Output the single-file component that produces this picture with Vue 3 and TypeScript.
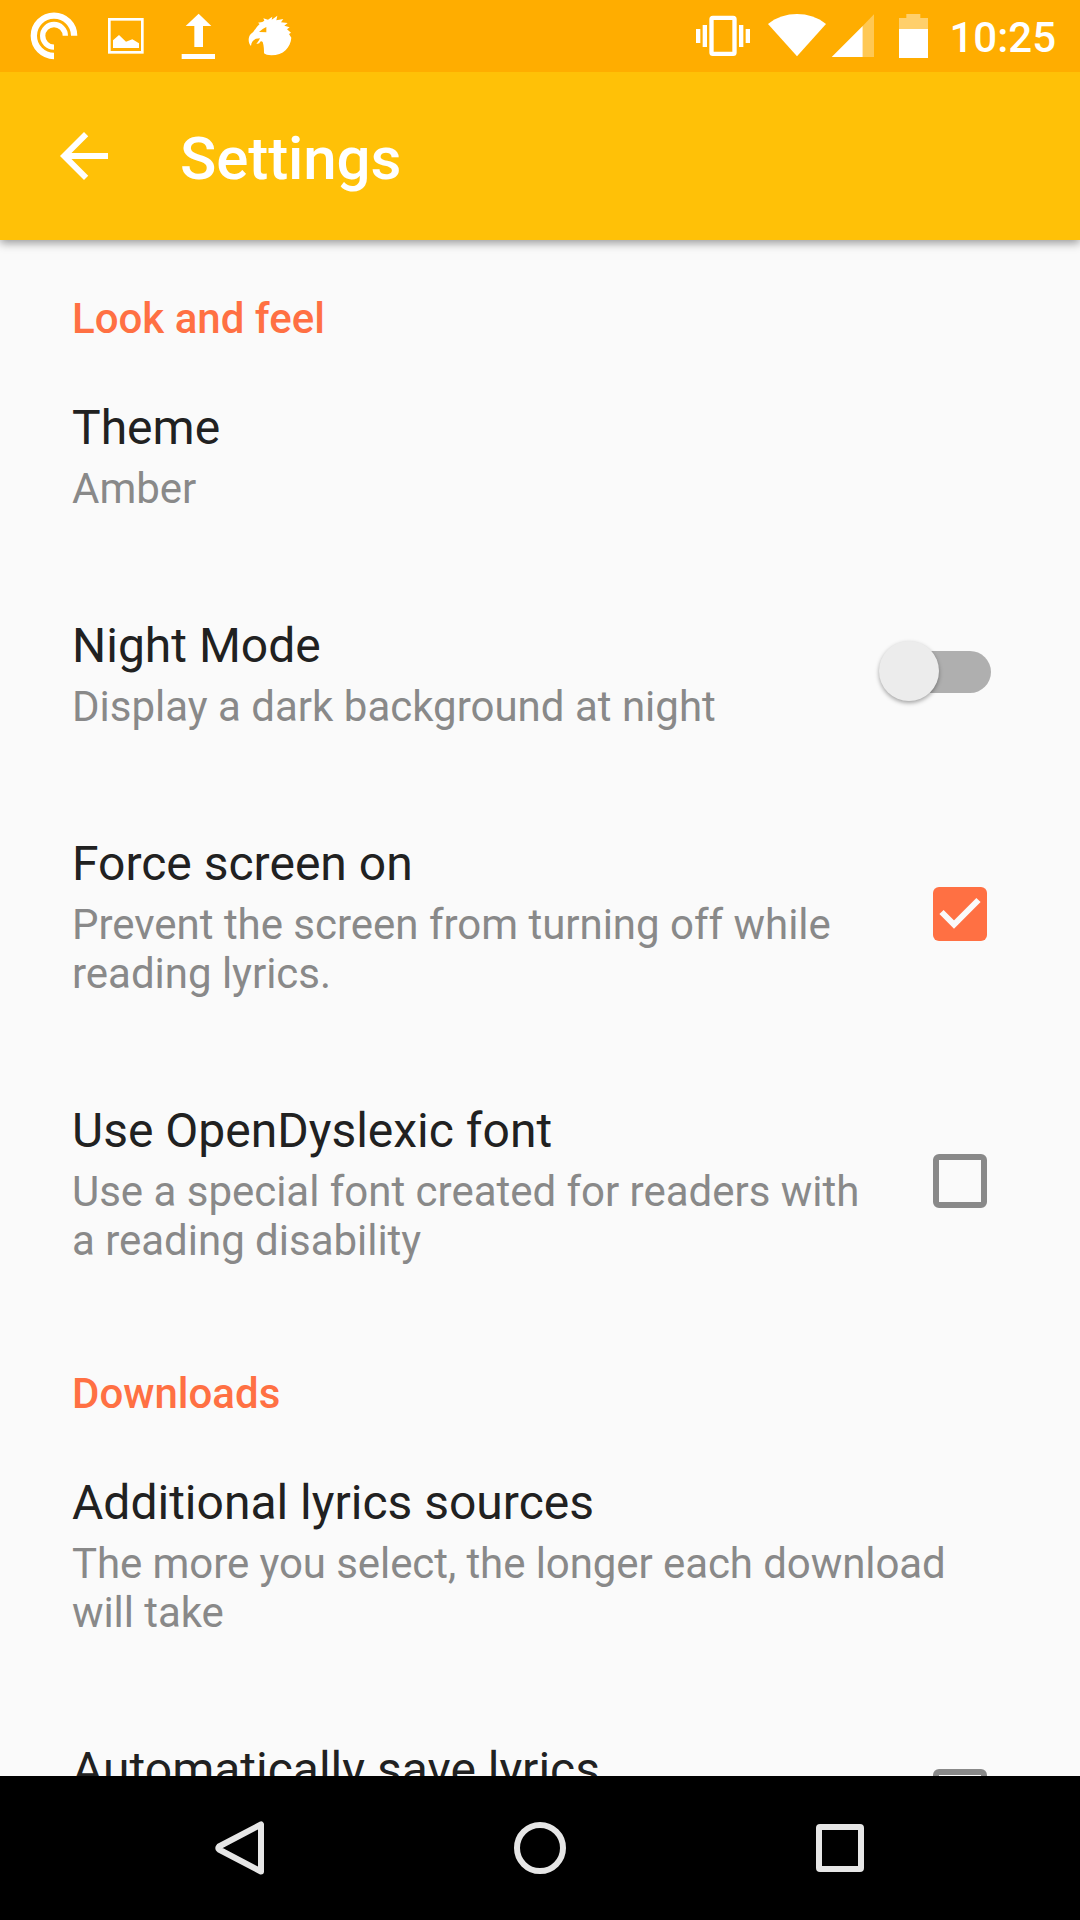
<script setup lang="ts">
interface Preference {
  title: string
  summary?: string
  tracking?: number
  control?: 'switch' | 'checkbox'
  on?: boolean
}

interface Section {
  name: string
  items: Preference[]
}

const sections: Section[] = [
  {
    name: 'Look and feel',
    items: [
      { title: 'Theme', summary: 'Amber' },
      { title: 'Night Mode', summary: 'Display a dark background at night', control: 'switch' },
      {
        title: 'Force screen on',
        summary: 'Prevent the screen from turning off while reading lyrics.',
        tracking: -0.02,
        control: 'checkbox',
        on: true,
      },
      {
        title: 'Use OpenDyslexic font',
        summary: 'Use a special font created for readers with a reading disability',
        tracking: -0.02,
        control: 'checkbox',
      },
    ],
  },
  {
    name: 'Downloads',
    items: [
      {
        title: 'Additional lyrics sources',
        summary: 'The more you select, the longer each download will take',
        tracking: -0.08,
      },
      { title: 'Automatically save lyrics', control: 'checkbox' },
    ],
  },
]
</script>

<template>
  <div class="screen">
    <div class="status-bar">
      <div class="status-group">
        <svg width="64" height="72" viewBox="84 0 192 216" fill="none" stroke="#fff">
          <path d="M222.500 107.500A60.500 60.500 0 1 0 162 168" stroke-width="19" />
          <path d="M196 107.500A34 34 0 1 0 162 141.500" stroke-width="16" />
        </svg>
        <svg width="72" height="72" viewBox="276 0 216 216">
          <rect x="328" y="58" width="99" height="99" fill="none" stroke="#fff" stroke-width="8" />
          <path d="M339 121L357 105L378 125L397 118L417 130V144H339Z" fill="#fff" />
        </svg>
        <svg width="68" height="72" viewBox="492 0 204 216" fill="#fff">
          <path d="M596 41L634 78H609V141H583V78H557Z" />
          <rect x="545" y="162" width="100" height="15" />
        </svg>
        <svg width="68" height="72" viewBox="696 0 204 216" fill="#fff">
          <path
            fill-rule="evenodd"
            d="M753 138C746 131 744 118 748 109C750 103 755 100 759 97L771 80L779 72L774 68L787 66L793 62L790 55L804 59L817 50L815 59L832 47L829 61L850 57L843 67L863 69L853 77L869 82L861 88L873 98L867 102L874 113C872 142 850 166 814 166C804 166 796 163 792 160C792 150 792 138 788 126C784 122 780 124 778 130L769 132L777 121L780 115L768 116C759 120 754 126 753 138ZM777 96L799 97V81L788 87Z"
          />
        </svg>
      </div>
      <div class="status-group">
        <svg width="70" height="72" viewBox="30 0 210 216" fill="#fff">
          <rect x="94.500" y="53.500" width="69" height="108" rx="4" fill="none" stroke="#fff" stroke-width="13" />
          <rect x="48" y="87" width="13" height="42" />
          <rect x="68" y="75" width="13" height="66" />
          <rect x="177" y="75" width="13" height="66" />
          <rect x="197" y="87" width="13" height="42" />
        </svg>
        <svg width="68" height="72" viewBox="240 0 204 216" fill="#fff">
          <path d="M351 169L264 72C288 52 320 42 351 42S414 52 438 72Z" />
        </svg>
        <svg width="64" height="72" viewBox="444 0 192 216" fill="#fff">
          <path d="M548 78L582 43V171H548Z" opacity="0.33" />
          <path d="M455 171L548 78V171Z" />
        </svg>
        <svg width="44" height="72" viewBox="636 0 132 216" fill="#fff">
          <path d="M679 42H721V54H744V87H657V54H679Z" opacity="0.42" />
          <rect x="657" y="87" width="87" height="87" />
        </svg>
        <span class="clock">10:25</span>
      </div>
    </div>

    <header class="app-bar">
      <svg width="72" height="72" viewBox="0 0 24 24" fill="#fff">
        <path d="M20 11H7.830l5.590-5.590L12 4l-8 8 8 8 1.410-1.410L7.830 13H20v-2z" />
      </svg>
      <h1>Settings</h1>
    </header>

    <main class="list">
      <section v-for="section in sections" :key="section.name">
        <h2>{{ section.name }}</h2>
        <div v-for="item in section.items" :key="item.title" class="row">
          <div class="text">
            <div class="title">{{ item.title }}</div>
            <div v-if="item.summary" class="summary" :style="{ letterSpacing: `${item.tracking ?? 0}px` }">
              {{ item.summary }}
            </div>
          </div>
          <div v-if="item.control" class="widget">
            <div v-if="item.control === 'switch'" class="switch"><div class="thumb"></div></div>
            <div v-else class="checkbox" :class="{ checked: item.on }">
              <svg v-if="item.on" width="54" height="54" viewBox="0 0 54 54">
                <path d="M8.500 25L21 37.500L45.500 13" fill="none" stroke="#fafafa" stroke-width="6" />
              </svg>
            </div>
          </div>
        </div>
      </section>
    </main>

    <nav class="nav-bar">
      <svg width="60" height="60" viewBox="0 0 60 60">
        <path d="M51 6.500V53.500L9 31.500Q7.500 30 9 28.500Z" />
      </svg>
      <svg width="60" height="60" viewBox="0 0 60 60"><circle cx="30" cy="30" r="23" /></svg>
      <svg width="60" height="60" viewBox="0 0 60 60"><rect x="9" y="9" width="42" height="42" rx="1" /></svg>
    </nav>
  </div>
</template>

<style>
body {
  background: #fafafa;
}
</style>

<style scoped>
.screen {
  display: flex;
  flex-direction: column;
  width: 1080px;
  height: 1920px;
  overflow: hidden;
  background: #fafafa;
  font-family: Roboto, sans-serif;
}

svg {
  display: block;
  flex: none;
}

.status-bar {
  display: flex;
  flex: none;
  justify-content: space-between;
  height: 72px;
  padding: 0 24px 0 28px;
  background: #ffad00;
  z-index: 2;
}

.status-group {
  display: flex;
}

.clock {
  width: 120px;
  text-align: right;
  font-size: 42px;
  font-weight: 500;
  line-height: 75px;
  color: #fff;
}

.app-bar {
  display: flex;
  flex: none;
  align-items: center;
  gap: 60px;
  height: 168px;
  padding-left: 48px;
  background: #ffc107;
  box-shadow: 0 3px 9px rgba(0, 0, 0, 0.4);
  z-index: 1;
}

h1 {
  margin: 6px 0 0;
  font-size: 60px;
  font-weight: 500;
  line-height: 70px;
  letter-spacing: -0.1px;
  color: #fff;
}

.list {
  flex: 1;
  min-height: 0;
  margin-top: -1px;
  overflow: hidden;
}

h2 {
  box-sizing: border-box;
  height: 105px;
  margin: 0;
  padding: 55px 72px 0;
  font-size: 42px;
  font-weight: 500;
  line-height: 49px;
  color: #ff7043;
}

.row {
  display: flex;
  align-items: center;
  min-height: 218px;
  padding: 0 72px;
}

.text {
  flex: 1;
  align-self: flex-start;
  padding: 56px 0 49px;
}

.title {
  font-size: 48px;
  line-height: 56px;
  color: #212121;
}

.summary {
  margin-top: 8px;
  font-size: 42px;
  line-height: 49px;
  color: #898989;
}

.widget {
  display: flex;
  justify-content: flex-end;
  width: 132px;
}

.switch {
  display: flex;
  align-items: center;
  width: 92px;
  height: 42px;
  margin: 1px 17px 0 0;
  border-radius: 21px;
  background: #afafaf;
}

.thumb {
  flex: none;
  width: 60px;
  height: 60px;
  margin: -1px 0 0 -20.5px;
  border-radius: 50%;
  background: #ececec;
  box-shadow: 0 2px 4px rgba(0, 0, 0, 0.35);
}

.checkbox {
  box-sizing: border-box;
  width: 54px;
  height: 54px;
  margin: 1px 21px 0 0;
  border: 6px solid #898989;
  border-radius: 6px;
}

.checkbox.checked {
  border: 0;
  background: #ff7043;
}

.nav-bar {
  display: flex;
  flex: none;
  align-items: center;
  justify-content: center;
  gap: 240px;
  height: 144px;
  background: #000;
}

.nav-bar svg {
  fill: none;
  stroke: #e6e6e6;
  stroke-width: 6;
  stroke-linejoin: round;
}
</style>
